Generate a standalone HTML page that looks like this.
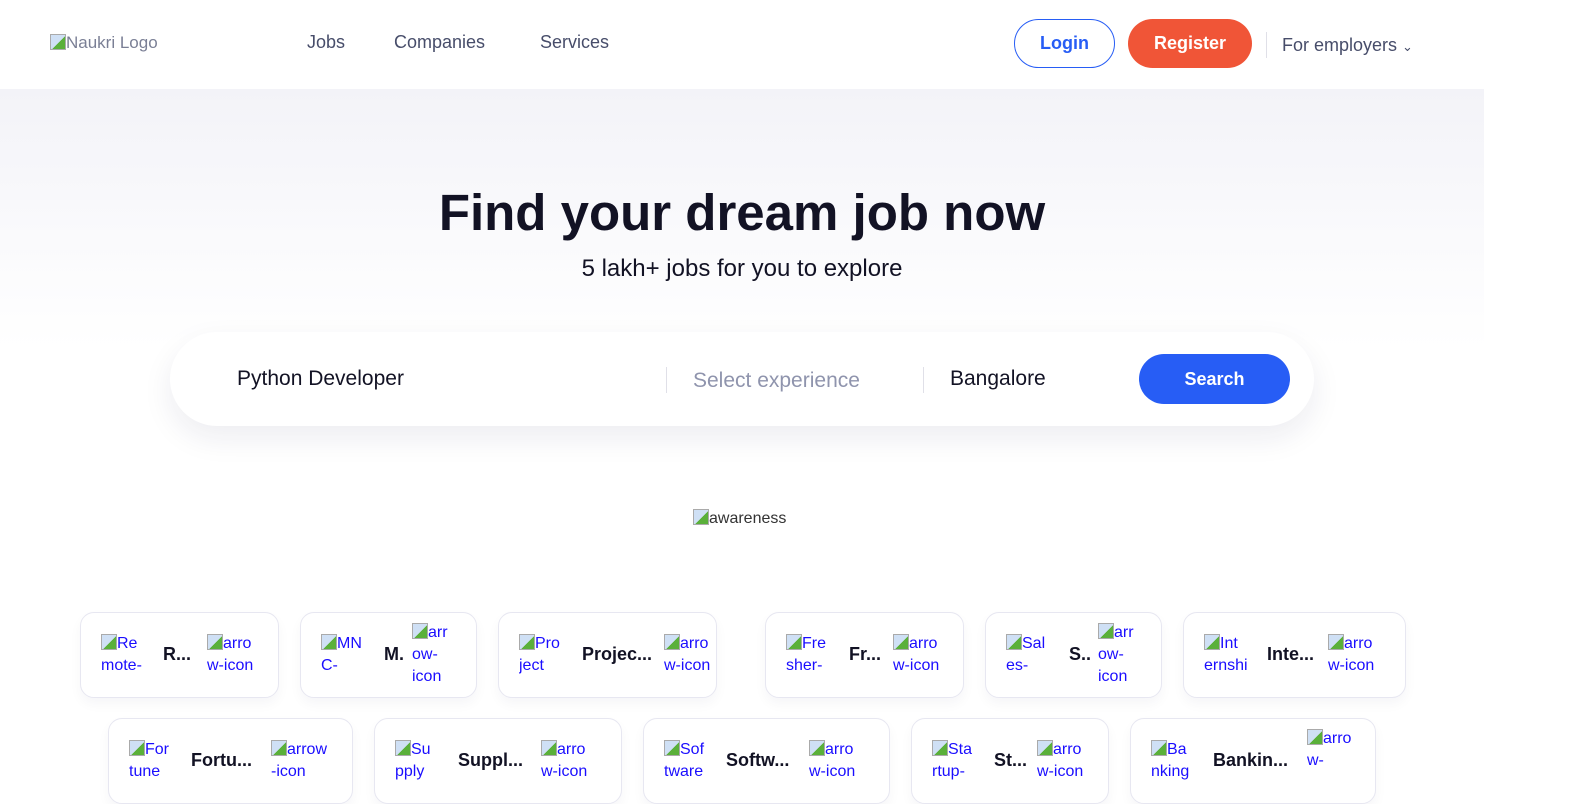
<!DOCTYPE html>
<html><head><meta charset="utf-8"><style>
*{margin:0;padding:0;box-sizing:border-box}
body{width:1584px;height:784px;overflow:hidden;background:#fff;font-family:"Liberation Sans",sans-serif;position:relative}
.a{position:absolute}
.hero{left:0;top:89px;width:1484px;height:260px;background:linear-gradient(#f3f3f8,#fff)}
.nav{font-size:18px;color:#474d6a;top:32px}
.card{position:absolute;border:1px solid #e7e7f1;border-radius:14px;background:#fff;box-shadow:0 6px 12px rgba(30,30,80,.04);height:86px;overflow:hidden}
.alt{position:absolute;color:#1a0dff;font-size:16px;line-height:22px;overflow:hidden;white-space:nowrap}
.ttl{position:absolute;top:31px;font-weight:bold;font-size:18px;color:#121224}
.bi{display:inline-block;width:16px;height:16px;vertical-align:-2px;background:linear-gradient(135deg,#cfe0f5 55%,#5ab03a 55%);border:1px solid #aaa}
</style></head><body>
<div class="a hero"></div>
<div class="a" style="left:50px;top:33px;font-size:17px;color:#7a7f95"><span class="bi"></span>Naukri Logo</div>
<div class="a nav" style="left:307px">Jobs</div>
<div class="a nav" style="left:394px">Companies</div>
<div class="a nav" style="left:540px">Services</div>
<div class="a" style="left:1014px;top:19px;width:101px;height:49px;border:1px solid #275df5;border-radius:25px;color:#275df5;font-weight:bold;font-size:18px;text-align:center;line-height:47px">Login</div>
<div class="a" style="left:1128px;top:19px;width:124px;height:49px;background:#f05537;border-radius:25px;color:#fff;font-weight:bold;font-size:18px;text-align:center;line-height:49px">Register</div>
<div class="a" style="left:1266px;top:32px;width:1px;height:26px;background:#e0e0e8"></div>
<div class="a" style="left:1282px;top:35px;font-size:18px;color:#474d6a">For employers <span style="font-size:13px">&#8964;</span></div>
<div class="a" style="left:0;width:1484px;top:183px;text-align:center;font-size:51px;font-weight:bold;color:#121224">Find your dream job now</div>
<div class="a" style="left:0;width:1484px;top:255px;text-align:center;font-size:24px;color:#121224">5 lakh+ jobs for you to explore</div>
<div class="a" style="left:170px;top:332px;width:1144px;height:94px;background:#fff;border-radius:47px;box-shadow:0 12px 30px rgba(30,30,80,.08)"></div>
<div class="a" style="left:237px;top:367px;font-size:21px;color:#121224">Python Developer</div>
<div class="a" style="left:666px;top:367px;width:1px;height:26px;background:#e0e0e8"></div>
<div class="a" style="left:693px;top:369px;font-size:21px;color:#8f94ad">Select experience</div>
<div class="a" style="left:923px;top:367px;width:1px;height:26px;background:#e0e0e8"></div>
<div class="a" style="left:950px;top:367px;font-size:21px;color:#121224">Bangalore</div>
<div class="a" style="left:1139px;top:354px;width:151px;height:50px;background:#275df5;border-radius:25px;color:#fff;font-weight:bold;font-size:18px;text-align:center;line-height:50px">Search</div>
<div class="a" style="left:693px;top:509px;font-size:16px;color:#333"><span class="bi"></span>awareness</div>

<div class="card" style="left:80px;top:612px;width:199px"><div class="alt" style="left:20px;top:20px;width:44px"><span class="bi"></span>Re<br>mote-</div><div class="ttl" style="left:82px">R...</div><div class="alt" style="left:126px;top:20px;width:50px"><span class="bi"></span>arro<br>w-icon</div></div>
<div class="card" style="left:300px;top:612px;width:177px"><div class="alt" style="left:20px;top:20px;width:44px"><span class="bi"></span>MN<br>C-</div><div class="ttl" style="left:83px">M.</div><div class="alt" style="left:111px;top:9px;width:40px"><span class="bi"></span>arr<br>ow-<br>icon</div></div>
<div class="card" style="left:498px;top:612px;width:219px"><div class="alt" style="left:20px;top:20px;width:44px"><span class="bi"></span>Pro<br>ject</div><div class="ttl" style="left:83px">Projec...</div><div class="alt" style="left:165px;top:20px;width:50px"><span class="bi"></span>arro<br>w-icon</div></div>
<div class="card" style="left:765px;top:612px;width:199px"><div class="alt" style="left:20px;top:20px;width:44px"><span class="bi"></span>Fre<br>sher-</div><div class="ttl" style="left:83px">Fr...</div><div class="alt" style="left:127px;top:20px;width:50px"><span class="bi"></span>arro<br>w-icon</div></div>
<div class="card" style="left:985px;top:612px;width:177px"><div class="alt" style="left:20px;top:20px;width:44px"><span class="bi"></span>Sal<br>es-</div><div class="ttl" style="left:83px">S..</div><div class="alt" style="left:112px;top:9px;width:40px"><span class="bi"></span>arr<br>ow-<br>icon</div></div>
<div class="card" style="left:1183px;top:612px;width:223px"><div class="alt" style="left:20px;top:20px;width:44px"><span class="bi"></span>Int<br>ernshi</div><div class="ttl" style="left:83px">Inte...</div><div class="alt" style="left:144px;top:20px;width:50px"><span class="bi"></span>arro<br>w-icon</div></div>

<div class="card" style="left:108px;top:718px;width:245px"><div class="alt" style="left:20px;top:20px;width:44px"><span class="bi"></span>For<br>tune</div><div class="ttl" style="left:82px">Fortu...</div><div class="alt" style="left:162px;top:20px;width:66px"><span class="bi"></span>arrow<br>-icon</div></div>
<div class="card" style="left:374px;top:718px;width:248px"><div class="alt" style="left:20px;top:20px;width:44px"><span class="bi"></span>Su<br>pply</div><div class="ttl" style="left:83px">Suppl...</div><div class="alt" style="left:166px;top:20px;width:50px"><span class="bi"></span>arro<br>w-icon</div></div>
<div class="card" style="left:643px;top:718px;width:247px"><div class="alt" style="left:20px;top:20px;width:44px"><span class="bi"></span>Sof<br>tware</div><div class="ttl" style="left:82px">Softw...</div><div class="alt" style="left:165px;top:20px;width:50px"><span class="bi"></span>arro<br>w-icon</div></div>
<div class="card" style="left:911px;top:718px;width:198px"><div class="alt" style="left:20px;top:20px;width:44px"><span class="bi"></span>Sta<br>rtup-</div><div class="ttl" style="left:82px">St...</div><div class="alt" style="left:125px;top:20px;width:50px"><span class="bi"></span>arro<br>w-icon</div></div>
<div class="card" style="left:1130px;top:718px;width:246px"><div class="alt" style="left:20px;top:20px;width:44px"><span class="bi"></span>Ba<br>nking</div><div class="ttl" style="left:82px">Bankin...</div><div class="alt" style="left:176px;top:9px;width:50px"><span class="bi"></span>arro<br>w-</div></div>
</body></html>
